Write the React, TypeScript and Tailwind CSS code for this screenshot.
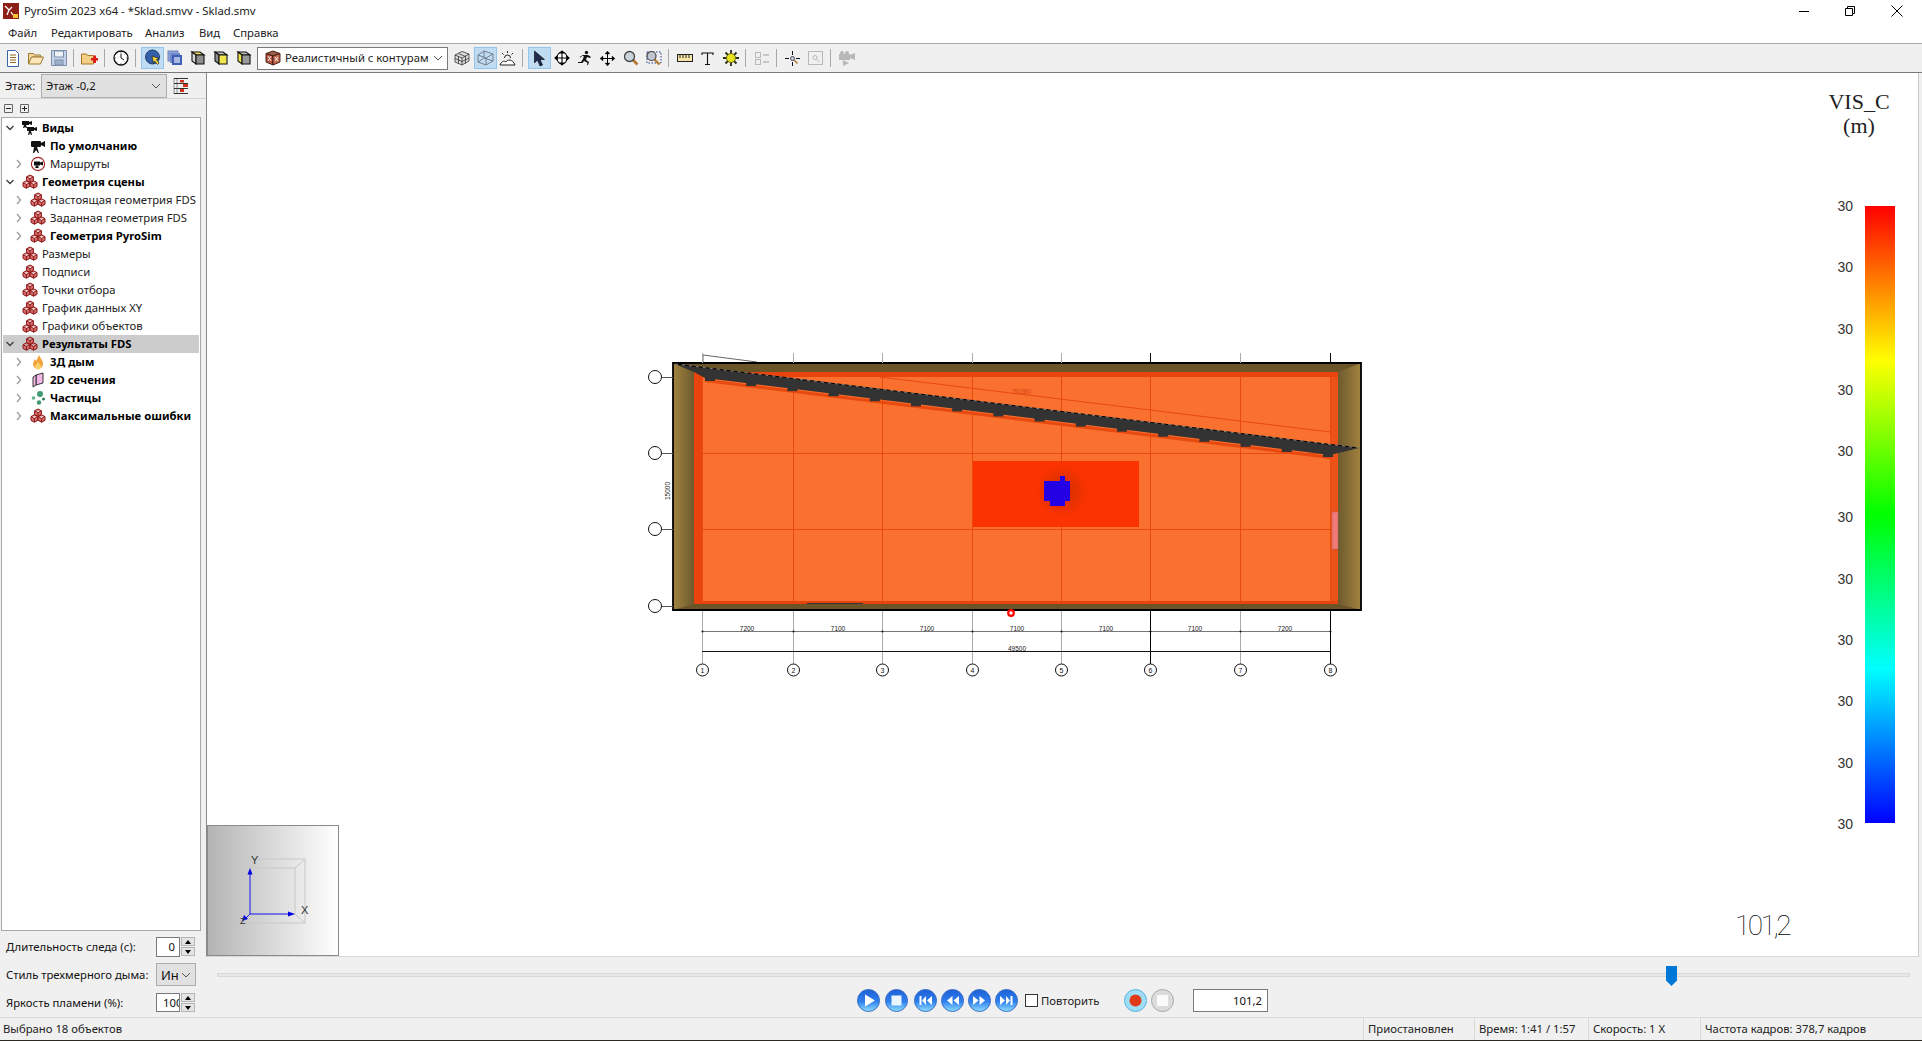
import React from "react";

// ---- small drawn icons ----
const Chevron = ({ open }: { open: boolean }) =>
  open ? (
    <svg width="10" height="10" viewBox="0 0 10 10" fill="none" stroke="#404040" strokeWidth="1.4">
      <path d="M1.5 3l3.5 3.5L8.5 3" />
    </svg>
  ) : (
    <svg width="10" height="10" viewBox="0 0 10 10" fill="none" stroke="#a0a0a0" strokeWidth="1.4">
      <path d="M3 1l3.5 4L3 9" />
    </svg>
  );

const cube = (x: number, y: number) =>
  `M${x} ${y}l3.4-1.8 3.4 1.8v3.8l-3.4 1.8-3.4-1.8zM${x} ${y}l3.4 1.8 3.4-1.8M${x + 3.4} ${y + 1.8}v3.8`;

const RedCubes = () => (
  <svg width="16" height="16" viewBox="0 0 16 16" fill="#d9706e" stroke="#8a1616" strokeWidth="1">
    <path d={cube(4.6, 2.8)} />
    <path d={cube(1, 8.6)} />
    <path d={cube(8.2, 8.6)} />
  </svg>
);

const Camera = () => (
  <svg width="16" height="16" viewBox="0 0 16 16" fill="#111">
    <rect x="1" y="3" width="10" height="6" rx="1" />
    <path d="M11 5l4-2v6l-4-2zM4 9h3l2 6H8l-2-3-2 3H3z" />
  </svg>
);

const Cameras = () => (
  <svg width="17" height="16" viewBox="0 0 17 16" fill="#111">
    <rect x="1" y="1" width="7" height="4" />
    <path d="M8 2l3-1v4L8 4zM3 5h2l1 3H5L4 7 3 8H2z" />
    <rect x="6" y="7" width="7" height="4" />
    <path d="M13 8l3-1v4l-3-1zM8 11h2l1 4h-1l-1-2-1 2H7z" />
  </svg>
);

const RouteIcon = () => (
  <svg width="16" height="16" viewBox="0 0 16 16">
    <circle cx="8" cy="8" r="6.6" fill="none" stroke="#a82020" strokeWidth="1.1" />
    <rect x="4" y="5.5" width="6" height="4" fill="#111" />
    <path d="M10 6.5l3-1v4l-3-1zM6 9.5h2l.8 2.5H5.2z" fill="#111" />
  </svg>
);

const Flame = () => (
  <svg width="16" height="16" viewBox="0 0 16 16">
    <path d="M9 1c1 3 4 5 4 9a5 5 0 0 1-10 0c0-2 1-3 2-5 .5 1 1 1.500 1.500 2C7 5 8 3 9 1z" fill="#f2a33a" />
    <path d="M8 8c1 2 3 2.500 3 4.500a3 3 0 0 1-6 0C5 11 7 10 8 8z" fill="#f7d26a" />
  </svg>
);

const Slice = () => (
  <svg width="16" height="16" viewBox="0 0 16 16" fill="#f2b8e6" stroke="#222" strokeWidth="0.9">
    <path d="M6 3l7-2v10l-7 2z" />
    <path d="M3 5l3-2v10l-3 2z" />
  </svg>
);

const Particles = () => (
  <svg width="16" height="16" viewBox="0 0 16 16">
    <circle cx="10" cy="4" r="3" fill="#3f9a72" />
    <circle cx="3.500" cy="8" r="1.800" fill="#5fb08c" />
    <circle cx="9" cy="12.500" r="2.200" fill="#3f9a72" />
    <circle cx="13.500" cy="9" r="1.500" fill="#2f7d58" />
  </svg>
);

// toolbar cube with coloured faces
const FaceCube = ({ a, b, c }: { a: string; b: string; c: string }) => (
  <svg width="16" height="16" viewBox="0 0 16 16" stroke="#111" strokeWidth="1.1">
    <path d="M2 2h8l4 3H6z" fill={a} />
    <path d="M2 2l4 3v9l-4-3z" fill={b} />
    <path d="M6 5h8v9H6z" fill={c} />
  </svg>
);

const TbIcons: Record<string, React.ReactNode> = {
  doc: (
    <svg width="14" height="17" viewBox="0 0 14 17" fill="#fff" stroke="#3c64a8">
      <path d="M1.500.5h8l3 3v13h-11z" />
      <path d="M4 5h6M4 7.500h6M4 10h6M4 12.500h6" stroke="#8f6a20" />
    </svg>
  ),
  open: (
    <svg width="16" height="14" viewBox="0 0 16 14" fill="#f4d9a0" stroke="#9c7a34">
      <path d="M.5 2.500h5l1 1.500h6v2H4l-3.500 7z" />
      <path d="M3.500 6h12l-3 7H.5z" fill="#fbe7b8" />
    </svg>
  ),
  save: (
    <svg width="16" height="16" viewBox="0 0 16 16" fill="#c5d3e8" stroke="#7d8fab">
      <path d="M.5.500h15v15H.5z" />
      <rect x="3.500" y="1" width="9" height="6" fill="#eef2f8" />
      <rect x="4" y="10" width="8" height="5" fill="#9fb0c9" />
    </svg>
  ),
  folderAdd: (
    <svg width="17" height="15" viewBox="0 0 17 15">
      <path d="M.5 3h5l1 1.500h6V13H.5z" fill="#f6cf86" stroke="#a8742a" />
      <path d="M10 7h2.500V4.500h2.500V7h2v2.500h-2V12h-2.500V9.500H10z" fill="#e01818" />
    </svg>
  ),
  clock: (
    <svg width="16" height="16" viewBox="0 0 16 16" fill="#fff" stroke="#111">
      <circle cx="8" cy="8" r="7" strokeWidth="1.300" />
      <path d="M8 3.500V8l3 2" />
      <path d="M8 1.500v1M14.500 8h-1M8 14.500v-1M1.500 8h1M3.500 3.500l.7.7M12.500 3.500l-.7.7M3.500 12.500l.7-.7M12.500 12.500l-.7-.7" />
    </svg>
  ),
  sphere: (
    <svg width="18" height="18" viewBox="0 0 18 18">
      <circle cx="8.500" cy="8" r="7" fill="#3360a8" stroke="#23406f" />
      <path d="M8 7l7 2.500-2.500 1L15 14l-1.500 1.500-3-3.500-1 2.500z" fill="#f6d33c" stroke="#222" strokeWidth="0.7" />
    </svg>
  ),
  layers: (
    <svg width="16" height="16" viewBox="0 0 16 16">
      <rect x="1" y="1" width="10" height="10" fill="#8fa3d6" stroke="#6f84bb" />
      <rect x="3" y="3" width="10" height="10" fill="#6f89cc" />
      <rect x="5" y="5" width="10" height="10" fill="#3f5fb4" />
      <rect x="7" y="7" width="6" height="6" fill="#a8b8e2" />
    </svg>
  ),
  cubeA: <FaceCube a="#efe25a" b="#d8d8d8" c="#8f8f8f" />,
  cubeB: <FaceCube a="#bdbdbd" b="#8f8f8f" c="#f2e64e" />,
  cubeC: <FaceCube a="#bdbdbd" b="#f2e64e" c="#9a9a9a" />,
  mesh: (
    <svg width="16" height="16" viewBox="0 0 16 16" fill="#ddd" stroke="#333" strokeWidth="0.8">
      <path d="M1 5l7-3.500L15 4v7l-7 4-7-3z" />
      <path d="M1 5l7 3 7-4M8 8v7M4.500 3.500l7 3M1 8.500l7 3 7-3.500M4.500 6.500v7M11.500 6v7.500" fill="none" />
    </svg>
  ),
  wire: (
    <svg width="17" height="16" viewBox="0 0 17 16" fill="none" stroke="#6b7580" strokeWidth="0.9">
      <path d="M1 5l6-4 9 3v7l-7 4-8-3zM1 5l8 3 7-4M9 8v7M7 1v6M1 12l6-4 9 3" />
    </svg>
  ),
  sun: (
    <svg width="17" height="15" viewBox="0 0 17 15" fill="none" stroke="#222">
      <path d="M1 14c1-3 4-5 6-3 1-3 7-3 9 3z" fill="#fff" />
      <path d="M5.500 7a3 3 0 0 1 6 0M8.500 0v2M3 2l1.500 1.500M14 2l-1.500 1.500" />
    </svg>
  ),
  arrow: (
    <svg width="13" height="17" viewBox="0 0 13 17">
      <path d="M1.500 1v12l3-3 2.500 6 2.500-1-2.500-5.500h4.500z" fill="#222c4c" stroke="#000" strokeWidth="0.6" />
    </svg>
  ),
  orbit: (
    <svg width="16" height="16" viewBox="0 0 16 16" fill="none" stroke="#000" strokeWidth="1.100">
      <ellipse cx="8" cy="8" rx="5" ry="6" fill="#fff" />
      <path d="M1 8h14M8 1v14M1 8l2-1.800v3.600zM15 8l-2-1.800v3.600zM8 1L6.200 3h3.600zM8 15l-1.800-2h3.600z" fill="#000" />
    </svg>
  ),
  run: (
    <svg width="16" height="16" viewBox="0 0 16 16" fill="#111">
      <circle cx="9.500" cy="2.500" r="1.700" />
      <path d="M6 5h5l3 2-1 1-3-1-1 3 3 2-1 3-1-.3.500-2-3.500-1.700-1.500 2H1v-1h3l2-3 .8-3H5L3.500 7.500 2.500 7z" />
    </svg>
  ),
  move: (
    <svg width="15" height="15" viewBox="0 0 15 15" fill="#000" stroke="#000">
      <path d="M7.500 1v13M1 7.500h13" />
      <path d="M7.500 0L5 3h5zM7.500 15L5 12h5zM0 7.500L3 5v5zM15 7.500L12 5v5z" strokeWidth="0.3" />
    </svg>
  ),
  zoom: (
    <svg width="16" height="16" viewBox="0 0 16 16">
      <path d="M9.500 9.500l5 5" stroke="#b57a32" strokeWidth="2.600" />
      <circle cx="6.500" cy="6.500" r="5" fill="#c9d3dc" stroke="#444" strokeWidth="1.300" />
    </svg>
  ),
  zoomBox: (
    <svg width="17" height="16" viewBox="0 0 17 16">
      <rect x="2" y="2" width="14" height="11" fill="none" stroke="#223a88" strokeDasharray="1.500 1.500" />
      <path d="M9.500 9.500l5 5" stroke="#b57a32" strokeWidth="2.400" />
      <circle cx="6.500" cy="6" r="4.500" fill="#c0c6d0" stroke="#444" strokeWidth="1.200" />
    </svg>
  ),
  ruler: (
    <svg width="16" height="8" viewBox="0 0 16 8">
      <rect x=".5" y=".5" width="15" height="7" fill="#f7e6a8" stroke="#222" />
      <path d="M3 1v3M6 1v3M9 1v3M12 1v3" stroke="#222" />
    </svg>
  ),
  text: (
    <svg width="13" height="13" viewBox="0 0 13 13" fill="none" stroke="#111" strokeWidth="1.100">
      <path d="M1 3V1h11v2M6.500 1v11.500M4 12.500h5" />
    </svg>
  ),
  bulb: (
    <svg width="16" height="16" viewBox="0 0 16 16">
      <path d="M8 0v16M0 8h16M2.500 2.500l11 11M13.500 2.500l-11 11" stroke="#2b2b10" strokeWidth="1.800" />
      <circle cx="8" cy="8" r="4.500" fill="#e8e21e" stroke="#6a6a10" />
    </svg>
  ),
  checklist: (
    <svg width="16" height="15" viewBox="0 0 16 15" fill="none" stroke="#b9b9b9">
      <rect x="1.500" y="1.500" width="5" height="5" />
      <rect x="1.500" y="8.500" width="5" height="5" />
      <path d="M9 4h6M9 11h6" strokeWidth="1.500" />
    </svg>
  ),
  target: (
    <svg width="15" height="15" viewBox="0 0 15 15" fill="none" stroke="#111">
      <path d="M7.500 0v4M7.500 11v4M0 7.500h4M11 7.500h4" />
      <circle cx="7.500" cy="7.500" r="2" fill="#c7d0e0" stroke="#445" />
      <path d="M9 9l3.500 3.500" stroke="#b57a32" strokeWidth="1.400" />
    </svg>
  ),
  frame: (
    <svg width="15" height="14" viewBox="0 0 15 14" fill="none" stroke="#b9b9b9">
      <rect x=".5" y=".5" width="14" height="13" />
      <circle cx="7" cy="6.500" r="2" />
      <path d="M8.500 8l3 3" />
    </svg>
  ),
  video: (
    <svg width="16" height="15" viewBox="0 0 16 15" fill="#b8b8b8">
      <rect x="0" y="3" width="11" height="6" />
      <path d="M11 4l5-2v7l-5-2zM4 9l6 3-6 3z" />
      <circle cx="3" cy="2" r="2" />
      <circle cx="8" cy="2" r="2" />
    </svg>
  ),
};

const TbBtn = ({ name, active }: { name: string; active?: boolean }) => (
  <div
    className={`flex h-[22px] w-[23px] shrink-0 items-center justify-center border ${
      active ? "border-[#93c6ee] bg-[#bfdcf3]" : "border-transparent pr-[2px]"
    }`}
  >
    {TbIcons[name]}
  </div>
);

const TbSep = () => <div className="ml-[2px] mr-[5px] h-[18px] w-px shrink-0 bg-[#a9a9a9]" />;

// ---- tree ----
type Row = {
  label: string;
  icon: React.ReactNode;
  level: 0 | 1;
  arrow?: "open" | "closed";
  bold?: boolean;
  selected?: boolean;
};

const rows: Row[] = [
  { label: "Виды", icon: <Cameras />, level: 0, arrow: "open", bold: true },
  { label: "По умолчанию", icon: <Camera />, level: 1, bold: true },
  { label: "Маршруты", icon: <RouteIcon />, level: 1, arrow: "closed" },
  { label: "Геометрия сцены", icon: <RedCubes />, level: 0, arrow: "open", bold: true },
  { label: "Настоящая геометрия FDS", icon: <RedCubes />, level: 1, arrow: "closed" },
  { label: "Заданная геометрия FDS", icon: <RedCubes />, level: 1, arrow: "closed" },
  { label: "Геометрия PyroSim", icon: <RedCubes />, level: 1, arrow: "closed", bold: true },
  { label: "Размеры", icon: <RedCubes />, level: 0 },
  { label: "Подписи", icon: <RedCubes />, level: 0 },
  { label: "Точки отбора", icon: <RedCubes />, level: 0 },
  { label: "График данных XY", icon: <RedCubes />, level: 0 },
  { label: "Графики объектов", icon: <RedCubes />, level: 0 },
  { label: "Результаты FDS", icon: <RedCubes />, level: 0, arrow: "open", bold: true, selected: true },
  { label: "3Д дым", icon: <Flame />, level: 1, arrow: "closed", bold: true },
  { label: "2D сечения", icon: <Slice />, level: 1, arrow: "closed", bold: true },
  { label: "Частицы", icon: <Particles />, level: 1, arrow: "closed", bold: true },
  { label: "Максимальные ошибки", icon: <RedCubes />, level: 1, arrow: "closed", bold: true },
];

const TreeRow = ({ row }: { row: Row }) => (
  <div className={`flex h-[18px] items-center whitespace-nowrap ${row.selected ? "bg-[#cccccc]" : ""}`}>
    <div className={`flex shrink-0 ${row.level === 0 ? "w-[17px] pl-[2px]" : "w-[25px] pl-[11px]"}`}>
      {row.arrow && <Chevron open={row.arrow === "open"} />}
    </div>
    <div className="mr-[3px] flex w-[19px] shrink-0 justify-center">{row.icon}</div>
    <span className={row.bold ? "font-bold text-black" : "text-[#222]"}>{row.label}</span>
  </div>
);

const Spin = ({ value, left }: { value: string; left?: boolean }) => (
  <div className="flex h-full items-start gap-px">
    <div
      className={`flex h-full w-[24px] items-center overflow-hidden border border-[#7a7a7a] bg-white ${
        left ? "justify-start pl-[6px]" : "justify-end pr-[4px]"
      }`}
    >
      {value}
    </div>
    <div className="flex w-[14px] flex-col gap-px">
      <div className="flex h-[9px] items-center justify-center border border-[#b5b5b5] bg-[#e4e4e4]">
        <div className="h-0 w-0 border-x-[3px] border-b-[4px] border-x-transparent border-b-black" />
      </div>
      <div className="flex h-[9px] items-center justify-center border border-[#b5b5b5] bg-[#e4e4e4]">
        <div className="h-0 w-0 border-x-[3px] border-t-[4px] border-x-transparent border-t-black" />
      </div>
    </div>
  </div>
);

const SelChevron = () => (
  <svg width="10" height="6" viewBox="0 0 10 6" fill="none" stroke="#555">
    <path d="M1 1l4 4 4-4" />
  </svg>
);

// ---- transport buttons ----
const glyphs: Record<string, React.ReactNode> = {
  play: <path d="M8 5.500l10 6-10 6z" fill="#fff" />,
  stop: <rect x="6.500" y="6.500" width="10" height="10" fill="#eaf6ff" />,
  first: <path d="M5.500 7h2v9h-2zM12 7v9l-4-4.500zM18 7v9l-5-4.500z" fill="#fff" />,
  back: <path d="M11.500 7v9l-5.500-4.500zM18 7v9l-5.500-4.500z" fill="#fff" />,
  fwd: <path d="M5 7v9l5.500-4.500zM11.500 7v9l5.500-4.500z" fill="#fff" />,
  last: <path d="M5 7v9l5-4.500zM11 7v9l4-4.500zM15.500 7h2v9h-2z" fill="#fff" />,
};

const RoundBtn = ({ name }: { name: string }) => (
  <svg width="23" height="23" viewBox="0 0 23 23" className="shrink-0">
    <defs>
      <linearGradient id={`pb-${name}`} x1="0" y1="0" x2="0" y2="1">
        <stop offset="0" stopColor="#1d5fd6" />
        <stop offset="0.55" stopColor="#2f80ee" />
        <stop offset="1" stopColor="#92e0ff" />
      </linearGradient>
    </defs>
    <circle cx="11.500" cy="11.500" r="11" fill={`url(#pb-${name})`} stroke="#3b6fc4" />
    {glyphs[name]}
  </svg>
);

// ---- the 3D scene, in page coordinates ----
const gridX = [702, 793, 882, 972, 1061, 1150, 1240, 1330];
const axisColor = ["#aaa", "#aaa", "#aaa", "#aaa", "#aaa", "#000", "#aaa", "#000"];
const dims = [
  [747, "7200"],
  [838, "7100"],
  [927, "7100"],
  [1017, "7100"],
  [1106, "7100"],
  [1195, "7100"],
  [1285, "7200"],
] as const;

const Scene = () => (
  <svg width="1712" height="884" viewBox="207 73 1712 884" className="absolute left-0 top-0">
    <defs>
      <linearGradient id="wallL" x1="0" y1="0" x2="1" y2="0">
        <stop offset="0" stopColor="#a2833f" />
        <stop offset="1" stopColor="#6e5a2e" />
      </linearGradient>
      <linearGradient id="wallR" x1="0" y1="0" x2="1" y2="0">
        <stop offset="0" stopColor="#6e5a2e" />
        <stop offset="1" stopColor="#a2833f" />
      </linearGradient>
      <radialGradient id="spot" cx="0.5" cy="0.5" r="0.5">
        <stop offset="0" stopColor="#a52a00" stopOpacity="0.55" />
        <stop offset="1" stopColor="#a52a00" stopOpacity="0" />
      </radialGradient>
    </defs>

    {/* walls */}
    <path d="M673 363H1361V610H673z" fill="#6a5428" />
    <path d="M673 363L694 372V604L673 610z" fill="url(#wallL)" />
    <path d="M1361 363L1338 372V604L1361 610z" fill="url(#wallR)" />
    <path d="M673 363H1361V610H673z" fill="none" stroke="#000" strokeWidth="1.800" />

    {/* floor */}
    <rect x="694" y="372" width="644" height="232" fill="#e8440c" />
    <rect x="702" y="377" width="628" height="224" fill="#f9702f" />
    <rect x="1330" y="377" width="8" height="224" fill="#ec5218" />

    {/* grid */}
    {gridX.map((x) => (
      <line key={x} x1={x + 0.5} y1="377" x2={x + 0.5} y2="601" stroke="#e8490f" />
    ))}
    <line x1="702" y1="453.500" x2="1330" y2="453.500" stroke="#e8490f" />
    <line x1="702" y1="529.500" x2="1330" y2="529.500" stroke="#e8490f" />

    {/* hot zone and fire */}
    <rect x="973" y="461" width="166" height="66" fill="#fb3300" />
    <circle cx="1062" cy="491" r="26" fill="url(#spot)" />
    <path d="M1044 481h16v-5h5v5h5v20h-5v5h-15v-5h-6z" fill="#2400e4" />

    {/* roof line */}
    <line x1="880" y1="377" x2="1330" y2="432" stroke="#e8490f" />
    <text x="1013" y="394" fontSize="6.500" fill="#d8400f" fontFamily="Liberation Sans, sans-serif">50280</text>

    {/* beam */}
    <path d="M705 380.500L1330 457.500" stroke="#e8490f" strokeWidth="3" fill="none" />
    {Array.from({ length: 16 }, (_, i) => {
      const x = 705 + i * 41.2;
      return <rect key={i} x={x} y={377 + (x - 705) * 0.123} width="10" height="4" fill="#333" />;
    })}
    <path d="M675 364L1359 448L1330 455L705 378L694 372z" fill="#333" />
    <line x1="675" y1="364" x2="1359" y2="448" stroke="#000" />
    <line x1="675" y1="364" x2="1359" y2="448" stroke="#fff" strokeWidth="0.5" strokeDasharray="3 4" />

    {/* door */}
    <rect x="1332" y="512" width="6" height="37" fill="#f07a78" stroke="#b86060" strokeWidth="0.5" />
    <line x1="807" y1="603.500" x2="863" y2="603.500" stroke="#333" />

    {/* axes above and below */}
    <path d="M703 355L757 362M703 355V363" stroke="#222" strokeWidth="0.7" fill="none" />
    {gridX.map((x, i) => (
      <g key={x}>
        <line x1={x + 0.5} y1="353" x2={x + 0.5} y2="363" stroke={axisColor[i]} />
        <line x1={x + 0.5} y1="611" x2={x + 0.5} y2="664" stroke={axisColor[i]} />
        <circle cx={x + 0.5} cy="670" r="6" fill="#fff" stroke="#111" />
        <text x={x + 0.5} y="672.500" fontSize="7" textAnchor="middle" fill="#111" fontFamily="Liberation Sans, sans-serif">
          {i + 1}
        </text>
      </g>
    ))}
    <line x1="702" y1="631.500" x2="1330" y2="631.500" stroke="#777" />
    <line x1="702" y1="651.500" x2="1330" y2="651.500" stroke="#111" />
    {gridX.map((x) => (
      <circle key={x} cx={x + 0.5} cy="631.500" r="1" fill="#111" />
    ))}
    {dims.map(([x, t]) => (
      <text key={x} x={x} y="631" fontSize="6.500" textAnchor="middle" fill="#222" fontFamily="Liberation Sans, sans-serif">
        {t}
      </text>
    ))}
    <text x="1017" y="651" fontSize="6.500" textAnchor="middle" fill="#222" fontFamily="Liberation Sans, sans-serif">49500</text>

    {/* left grid bubbles */}
    {[377, 453, 529, 606].map((y) => (
      <g key={y}>
        <line x1="662" y1={y + 0.5} x2="673" y2={y + 0.5} stroke="#555" />
        <circle cx="655" cy={y} r="6.500" fill="#fff" stroke="#111" />
      </g>
    ))}
    <text x="0" y="0" fontSize="6.500" textAnchor="middle" fill="#222" transform="translate(670 491) rotate(-90)" fontFamily="Liberation Sans, sans-serif">
      15000
    </text>

    {/* camera marker */}
    <circle cx="1011" cy="613" r="2.800" fill="#fff" stroke="#f00" strokeWidth="2.200" />
  </svg>
);

const AxisCube = () => (
  <div className="absolute bottom-0 left-0 h-[131px] w-[132px] border border-[#8a8a8a] bg-[linear-gradient(to_right,#b4b4b4,#ffffff)]">
    <svg width="130" height="129" viewBox="208 826 130 129" className="block">
      <path d="M241 859h64v64h-64zM250 868h45v46h-45zM241 859l9 9M305 859l-10 9M305 923l-10-9M241 923l9-9" fill="none" stroke="#c8c8c8" />
      <path d="M250 914V874M250 914H289M250 914l-5 5" stroke="#1818f0" fill="none" />
      <path d="M250 868l-2.500 6.500h5zM295 914l-7-2.500v5zM242 921l2-6 4 4z" fill="#0000e6" />
      <text x="251" y="864" fontSize="11" fill="#333" fontFamily="Liberation Sans, sans-serif">Y</text>
      <text x="301" y="914" fontSize="11" fill="#333" fontFamily="Liberation Sans, sans-serif">X</text>
      <text x="240" y="924" fontSize="9" fill="#333" fontFamily="Liberation Sans, sans-serif">Z</text>
    </svg>
  </div>
);

const Legend = () => (
  <>
    <div className="absolute right-[28px] top-[17px] w-[62px] text-center font-['Liberation_Serif',serif] text-[22px] leading-[24px] text-[#222]">
      <div>VIS_C</div>
      <div>(m)</div>
    </div>
    <div className="absolute right-[65px] top-[124px] flex flex-col gap-[43.300px] font-['Liberation_Sans',sans-serif] text-[14px] leading-[18px] text-[#333]">
      {Array.from({ length: 11 }, (_, i) => (
        <div key={i} className={i === 5 ? "mt-[5px]" : ""}>
          30
        </div>
      ))}
    </div>
    <div className="absolute right-[23px] top-[133px] h-[617px] w-[30px] bg-[linear-gradient(to_bottom,#ff0000,#ffff00,#00ff00,#00ffff,#0000ff)]" />
    <div className="absolute left-[1528px] top-[836px] font-['Roboto',sans-serif] text-[28px] font-thin leading-[34px] tracking-[-2.500px] text-black">
      101,2
    </div>
  </>
);

export default function App() {
  return (
    <div className="flex h-[1041px] w-[1922px] flex-col overflow-hidden bg-[#f0f0f0] font-['Noto_Sans',sans-serif] text-[11.300px] leading-[16px] text-[#111]">
      {/* title bar */}
      <div className="flex h-[22px] shrink-0 items-center bg-white pl-[3px]">
        <svg width="16" height="16" viewBox="0 0 16 16" className="mr-[5px]">
          <rect width="16" height="16" fill="#8c1f16" />
          <path d="M2 3l4 4-2 5M6 7l3-3M8 9l2 3" stroke="#fff" strokeWidth="1.300" fill="none" />
          <path d="M10 11h5v4h-5z" fill="#f2c230" />
        </svg>
        <span className="text-[#222]">PyroSim 2023 x64 - *Sklad.smvv - Sklad.smv</span>
        <div className="ml-auto flex items-center pr-[19px]">
          <div className="mr-[36px] h-px w-[10px] bg-black" />
          <svg width="10" height="10" viewBox="0 0 10 10" fill="none" stroke="#000" className="mr-[36px]">
            <path d="M.5 2.500h7v7h-7zM2.500 2.500v-2h7v7h-2" />
          </svg>
          <svg width="12" height="12" viewBox="0 0 12 12" stroke="#000">
            <path d="M.5.500l11 11M11.500.500l-11 11" />
          </svg>
        </div>
      </div>

      {/* menu */}
      <div className="flex h-[21px] shrink-0 items-center bg-white pl-[8px] text-[#222]">
        <span className="w-[43px]">Файл</span>
        <span className="w-[94px]">Редактировать</span>
        <span className="w-[54px]">Анализ</span>
        <span className="w-[34px]">Вид</span>
        <span>Справка</span>
      </div>

      {/* toolbar */}
      <div className="flex h-[30px] shrink-0 items-center border-y border-t-[#a8a8a8] border-b-[#7a7a7a] pl-[2px]">
        <TbBtn name="doc" />
        <TbBtn name="open" />
        <TbBtn name="save" />
        <TbSep />
        <TbBtn name="folderAdd" />
        <TbSep />
        <TbBtn name="clock" />
        <TbSep />
        <TbBtn name="sphere" active />
        <TbBtn name="layers" />
        <TbBtn name="cubeA" />
        <TbBtn name="cubeB" />
        <TbBtn name="cubeC" />
        <div className="ml-px mr-[3px] flex h-[23px] w-[191px] shrink-0 items-center border border-[#7a7a7a] bg-white pl-[7px]">
          <svg width="16" height="16" viewBox="0 0 16 16" className="mr-[4px] shrink-0" stroke="#3a1a10" strokeWidth="0.9">
            <path d="M1 3.500l7-2.500 7 2.500-7 2.500z" fill="#9c5f45" />
            <path d="M1 3.500l7 2.500v9l-7-3z" fill="#b5533d" />
            <path d="M8 6l7-2.500v8.500l-7 3z" fill="#c46a50" />
            <path d="M3 6l3 5M6 6l-3 5M10 7l3 4M13 7l-3 4" stroke="#fff" />
          </svg>
          <span className="whitespace-nowrap text-[#222]">Реалистичный с контурам</span>
          <div className="ml-auto pr-[4px]">
            <SelChevron />
          </div>
        </div>
        <TbBtn name="mesh" />
        <TbBtn name="wire" active />
        <TbBtn name="sun" />
        <TbSep />
        <TbBtn name="arrow" active />
        <TbBtn name="orbit" />
        <TbBtn name="run" />
        <TbBtn name="move" />
        <TbBtn name="zoom" />
        <TbBtn name="zoomBox" />
        <TbSep />
        <TbBtn name="ruler" />
        <TbBtn name="text" />
        <TbBtn name="bulb" />
        <TbSep />
        <TbBtn name="checklist" />
        <TbSep />
        <TbBtn name="target" />
        <TbBtn name="frame" />
        <TbSep />
        <TbBtn name="video" />
      </div>

      {/* main */}
      <div className="flex min-h-0 flex-1">
        {/* left panel */}
        <div className="flex w-[206px] shrink-0 flex-col">
          <div className="flex h-[26px] shrink-0 items-center border-b border-[#d4d4d4] pl-[5px]">
            <span className="w-[36px]">Этаж:</span>
            <div className="flex h-[24px] w-[126px] items-center border border-[#adadad] bg-[#e1e1e1] pl-[4px] pr-[5px]">
              Этаж -0,2
              <div className="ml-auto">
                <SelChevron />
              </div>
            </div>
            <svg width="16" height="16" viewBox="0 0 16 16" className="ml-[6px]" fill="none">
              <path d="M1 .5h14M1 5.500h14M1 10.500h14M1 15.500h14" stroke="#333" />
              <path d="M1 .5v15M4 .5v15" stroke="#333" strokeDasharray="1 1" />
              <path d="M7 2h4v2.500H7zM10 6h5v3h-5zM7 11h4v3H7z" fill="#d0301c" />
            </svg>
          </div>
          <div className="flex h-[18px] shrink-0 items-center gap-[7px] pl-[4px]">
            {["M2 4.500h5", "M2 4.500h5M4.500 2v5"].map((d) => (
              <svg key={d} width="9" height="9" viewBox="0 0 9 9" fill="none" stroke="#222">
                <path d="M.5.500h8v8h-8z" stroke="#666" />
                <path d={d} />
              </svg>
            ))}
          </div>
          <div className="ml-px mr-[5px] flex-1 border border-[#a8a8a8] bg-white pl-px pr-px pt-px">
            {rows.map((row) => (
              <TreeRow key={row.label} row={row} />
            ))}
          </div>
          <div className="flex h-[86px] shrink-0 flex-col pl-[6px] pt-[6px] whitespace-nowrap">
            <div className="flex h-[20px] items-center">
              <span className="w-[150px]">Длительность следа (с):</span>
              <Spin value="0" />
            </div>
            <div className="mt-[6px] flex h-[23px] items-center">
              <span className="w-[150px]">Стиль трехмерного дыма:</span>
              <div className="flex h-[23px] w-[40px] items-center border border-[#adadad] bg-[#e1e1e1] pl-[4px] pr-[4px] text-[13px]">
                Ин
                <div className="ml-auto">
                  <SelChevron />
                </div>
              </div>
            </div>
            <div className="mt-[7px] flex h-[19px] items-center">
              <span className="w-[150px]">Яркость пламени (%):</span>
              <Spin value="100" left />
            </div>
          </div>
        </div>

        {/* right side */}
        <div className="flex min-w-0 flex-1 flex-col pr-[3px]">
          <div className="relative flex-1 overflow-hidden border-l border-r border-b border-l-[#8a8a8a] border-r-[#c8c8c8] border-b-[#d8d8d8] bg-white">
            <Scene />
            <AxisCube />
            <Legend />
          </div>
          <div className="relative h-[60px] shrink-0">
            <div className="ml-[11px] mt-[16px] h-[4px] w-[1693px] border border-[#d9d9d9] bg-[#e7e7e7]" />
            <div className="absolute left-[1460px] top-[9px] h-[20px] w-[11px] bg-[#0078d7] [clip-path:polygon(0_0,100%_0,100%_72%,50%_100%,0_72%)]" />
            <div className="ml-[651px] mt-[12px] flex h-[23px] items-center">
              <RoundBtn name="play" />
              <div className="w-[5px]" />
              <RoundBtn name="stop" />
              <div className="w-[6px]" />
              <RoundBtn name="first" />
              <div className="w-[4px]" />
              <RoundBtn name="back" />
              <div className="w-[4px]" />
              <RoundBtn name="fwd" />
              <div className="w-[4px]" />
              <RoundBtn name="last" />
              <div className="ml-[7px] h-[13px] w-[13px] border border-[#333] bg-white" />
              <span className="ml-[3px] w-[83px] text-[#222]">Повторить</span>
              <svg width="23" height="23" viewBox="0 0 23 23" className="shrink-0">
                <circle cx="11.500" cy="11.500" r="11" fill="#9fdcf6" stroke="#5ab2e2" />
                <circle cx="11.500" cy="11.500" r="6" fill="#e03a16" />
              </svg>
              <svg width="23" height="23" viewBox="0 0 23 23" className="ml-[4px] shrink-0">
                <circle cx="11.500" cy="11.500" r="11" fill="#dcdcdc" stroke="#a8a8a8" />
                <rect x="6" y="6" width="11" height="11" fill="#fafafa" />
              </svg>
              <div className="ml-[19px] flex h-[23px] w-[75px] items-center justify-end border border-[#7a7a7a] bg-white pr-[5px]">
                101,2
              </div>
            </div>
          </div>
        </div>
      </div>

      {/* status bar */}
      <div className="flex h-[23px] shrink-0 items-center whitespace-nowrap border-t border-[#d9d9d9] text-[#222]">
        <div className="w-[1363px] pl-[3px]">Выбрано 18 объектов</div>
        <div className="h-full w-[111px] border-l border-[#d9d9d9] pl-[4px] leading-[21px]">Приостановлен</div>
        <div className="h-full w-[114px] border-l border-[#d9d9d9] pl-[4px] leading-[21px]">Время: 1:41 / 1:57</div>
        <div className="h-full w-[112px] border-l border-[#d9d9d9] pl-[4px] leading-[21px]">Скорость: 1 X</div>
        <div className="h-full flex-1 border-l border-[#d9d9d9] pl-[4px] leading-[21px]">Частота кадров: 378,7 кадров</div>
      </div>
      <div className="h-px shrink-0 bg-[#2a2a20]" />
    </div>
  );
}
